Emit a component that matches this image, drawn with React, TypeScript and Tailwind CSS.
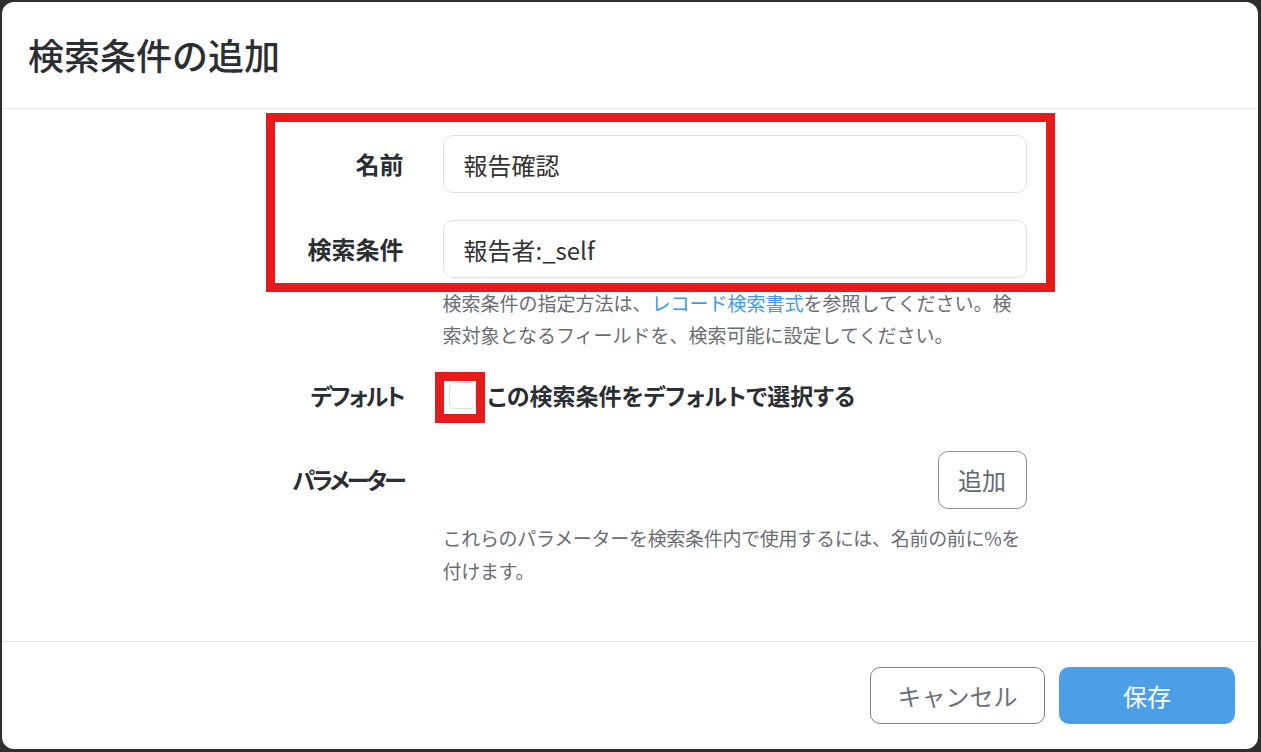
import { useState } from "react";

export default function App() {
    const [name, setName] = useState("報告確認");
    const [query, setQuery] = useState("報告者:_self");
    const [isDefault, setIsDefault] = useState(false);

    return (
        <div className="h-screen w-full bg-[#2e2e2e] p-[2px] pr-[3px] pb-[3px] font-['Noto_Sans_CJK_JP','Noto_Sans',sans-serif]">
            <div className="relative flex h-full flex-col rounded-[12px] bg-white">
                <div className="flex h-[107px] items-center border-b border-[#e3e5e8] pl-[26px] pb-[2px]">
                    <h1 className="text-[36px] font-medium text-[#2b2e33]">検索条件の追加</h1>
                </div>

                <div className="flex-1 pt-[26px]">
                    <div className="mx-auto grid w-[793px] grid-cols-[170px_584px] items-center gap-x-[39px] text-[#2b2e33]">
                        <label htmlFor="name" className="text-right text-[24px] font-bold">名前</label>
                        <input
                            id="name"
                            className="h-[58px] rounded-[10px] border border-[#dfe2e6] px-[20px] text-[24px] text-[#333] outline-none"
                            value={name}
                            onChange={(e) => setName(e.target.value)}
                        />

                        <label htmlFor="query" className="mt-[27px] text-right text-[24px] font-bold">検索条件</label>
                        <input
                            id="query"
                            className="mt-[27px] h-[58px] rounded-[10px] border border-[#dfe2e6] px-[20px] text-[24px] text-[#333] outline-none"
                            value={query}
                            onChange={(e) => setQuery(e.target.value)}
                        />

                        <div />
                        <p className="mt-[9px] text-[19px] leading-[32px] text-[#6a6d72]">
                            検索条件の指定方法は、<a className="text-[#3d9be9]">レコード検索書式</a>を参照してください。検索対象となるフィールドを、検索可能に設定してください。
                        </p>

                        <label className="mt-[27px] text-right text-[23px] font-bold tracking-[-2px] [font-feature-settings:'palt']">デフォルト</label>
                        <label className="mt-[27px] flex items-center gap-[12px]">
                            <input
                                type="checkbox"
                                checked={isDefault}
                                onChange={(e) => setIsDefault(e.target.checked)}
                                className="ml-[6px] h-[27px] w-[27px] appearance-none rounded-[6px] border border-[#dcdfe3] bg-white"
                            />
                            <span className="text-[23px] font-bold [font-feature-settings:'palt']">この検索条件をデフォルトで選択する</span>
                        </label>

                        <label className="mt-[38px] text-right text-[23px] font-bold tracking-[-3px] [font-feature-settings:'palt']">パラメーター</label>
                        <div className="mt-[38px] flex justify-end">
                            <button className="h-[58px] w-[89px] rounded-[10px] border border-[#8c9096] text-[24px] text-[#666a70]">
                                追加
                            </button>
                        </div>

                        <div />
                        <p className="mt-[12px] text-[19px] leading-[33px] tracking-[-0.3px] text-[#6a6d72]">
                            これらのパラメーターを検索条件内で使用するには、名前の前に%を付けます。
                        </p>
                    </div>
                </div>

                <div className="flex justify-end gap-[14px] border-t border-[#e3e5e8] pt-[25px] pb-[25px] pr-[23px]">
                    <button className="h-[57px] w-[175px] rounded-[10px] border border-[#7c8189] text-[24px] text-[#6b7078]">
                        キャンセル
                    </button>
                    <button className="h-[57px] w-[176px] rounded-[10px] bg-[#4a9fe7] text-[24px] text-white">
                        保存
                    </button>
                </div>

                {/* annotation boxes */}
                <div className="pointer-events-none absolute left-[264px] top-[111px] h-[179px] w-[789px] border-[9px] border-[#e61c1c]" />
                <div className="pointer-events-none absolute left-[433px] top-[370px] h-[51px] w-[50px] border-[9px] border-[#e61c1c]" />
            </div>
        </div>
    );
}
